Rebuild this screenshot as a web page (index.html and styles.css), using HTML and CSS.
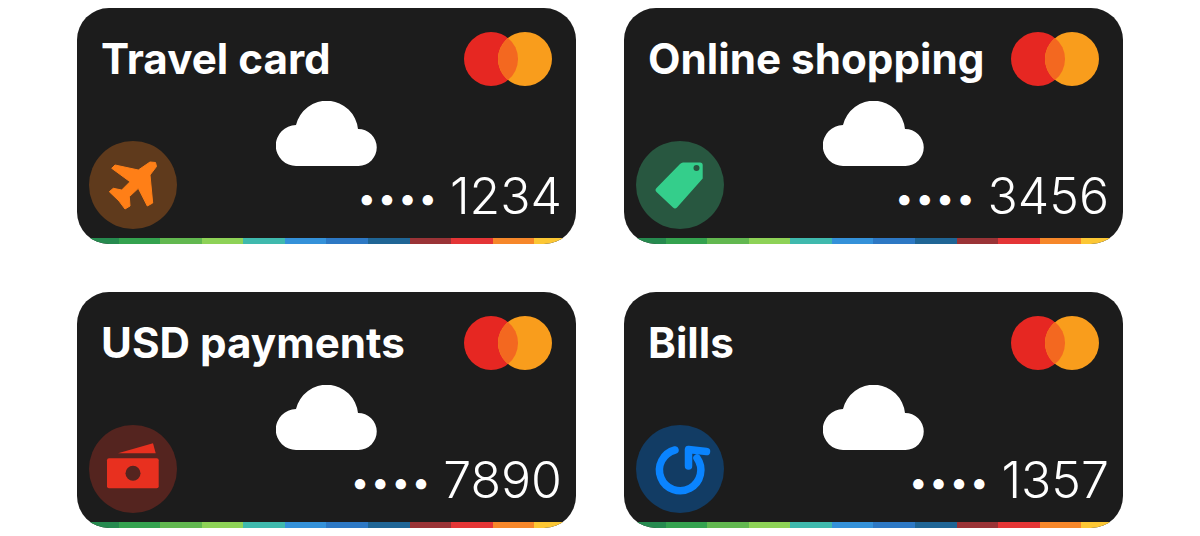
FILE: index.html
```html
<!DOCTYPE html>
<html lang="en">
<head>
    <meta charset="UTF-8">
    <meta name="viewport" content="width=device-width, initial-scale=1.0">
    <title>Cards</title>
    <link rel="stylesheet" href="styles.css">
</head>
<body>
    <svg class="defs" width="0" height="0" aria-hidden="true">
        <symbol id="mastercard" viewBox="0 0 88 54">
            <circle cx="27" cy="27" r="27" fill="#e62722"/>
            <circle cx="61" cy="27" r="27" fill="#f99d1c"/>
            <path d="M44 6A27 27 0 0 1 44 48A27 27 0 0 1 44 6Z" fill="#f36820"/>
        </symbol>
        <symbol id="cloud" viewBox="0 0 102 65">
            <path d="M20.500 65A20.500 20.500 0 0 1 20 24A31.500 31.500 0 0 1 82 28A18.500 18.500 0 0 1 82.500 65Z" fill="#fff"/>
        </symbol>
    </svg>

    <div class="cards">
        <div class="card">
            <div class="card-top">
                <h2 class="card-name">Travel card</h2>
                <svg class="mc-logo"><use href="#mastercard"/></svg>
            </div>
            <svg class="cloud"><use href="#cloud"/></svg>
            <div class="card-bottom">
                <div class="badge badge-orange">
                    <svg viewBox="0 0 88 88">
                        <polygon class="plane" points="66.500,21.500 67.500,25.500 61,34 63.700,62 58.300,65 49.300,47.300 40.300,55.700 41,65 36,68 30,60 20.300,50.700 24.300,47.300 32.700,49 41,40.700 22.700,27.300 26,24 49.300,29 61,21"/>
                    </svg>
                </div>
                <div class="card-number"><span class="dots">••••</span>1234</div>
            </div>
            <div class="stripe"><i></i><i></i><i></i><i></i><i></i><i></i><i></i><i></i><i></i><i></i><i></i><i></i></div>
        </div>

        <div class="card">
            <div class="card-top">
                <h2 class="card-name">Online shopping</h2>
                <svg class="mc-logo"><use href="#mastercard"/></svg>
            </div>
            <svg class="cloud"><use href="#cloud"/></svg>
            <div class="card-bottom">
                <div class="badge badge-green">
                    <svg viewBox="0 0 88 88">
                        <path class="tag" d="M47 21.500H64Q66.700 21.500 66.700 24V37.500L41 66.500Q39 68.500 37 66.500L20.500 51Q18.500 49 20.500 47L44 23Q45.500 21.500 47 21.500Z"/>
                        <circle class="tag-hole" cx="60.500" cy="27" r="3"/>
                    </svg>
                </div>
                <div class="card-number"><span class="dots">••••</span>3456</div>
            </div>
            <div class="stripe"><i></i><i></i><i></i><i></i><i></i><i></i><i></i><i></i><i></i><i></i><i></i><i></i></div>
        </div>

        <div class="card">
            <div class="card-top">
                <h2 class="card-name">USD payments</h2>
                <svg class="mc-logo"><use href="#mastercard"/></svg>
            </div>
            <svg class="cloud"><use href="#cloud"/></svg>
            <div class="card-bottom">
                <div class="badge badge-red">
                    <svg viewBox="0 0 88 88">
                        <polygon class="wallet" points="29,28.300 64,18.300 66.700,28.300"/>
                        <rect class="wallet" x="18" y="33.300" width="51.700" height="30" rx="2"/>
                        <circle class="wallet-hole" cx="44" cy="48.300" r="7.500"/>
                    </svg>
                </div>
                <div class="card-number"><span class="dots">••••</span>7890</div>
            </div>
            <div class="stripe"><i></i><i></i><i></i><i></i><i></i><i></i><i></i><i></i><i></i><i></i><i></i><i></i></div>
        </div>

        <div class="card">
            <div class="card-top">
                <h2 class="card-name">Bills</h2>
                <svg class="mc-logo"><use href="#mastercard"/></svg>
            </div>
            <svg class="cloud"><use href="#cloud"/></svg>
            <div class="card-bottom">
                <div class="badge badge-blue">
                    <svg viewBox="0 0 88 88">
                        <path class="repeat" d="M39 25A20.700 20.700 0 1 0 61 33"/>
                        <path class="repeat" d="M70.500 26.500L52.500 24.500V41"/>
                    </svg>
                </div>
                <div class="card-number"><span class="dots">••••</span>1357</div>
            </div>
            <div class="stripe"><i></i><i></i><i></i><i></i><i></i><i></i><i></i><i></i><i></i><i></i><i></i><i></i></div>
        </div>
    </div>
</body>
</html>
```

FILE: styles.css
```css
body {
    margin: 0;
    padding: 8px 0 0;
    background-color: #fff;
    font-family: Inter, "Liberation Sans", sans-serif;
}
.defs { position: absolute; }
.cards {
    display: grid;
    grid-template-columns: 499px 499px;
    gap: 48px;
    justify-content: center;
}
.card {
    position: relative;
    display: flex;
    flex-direction: column;
    height: 236px;
    border-radius: 32px;
    background-color: #1c1c1c;
    overflow: hidden;
}
.card-top {
    display: flex;
    justify-content: space-between;
    padding: 24px 24px 0 24px;
}
.card-name {
    margin: 0;
    font-size: 42.2px;
    font-weight: 650;
    line-height: 54px;
    color: #fff;
}
.mc-logo { width: 88px; height: 54px; }
.cloud {
    position: absolute;
    top: 93px;
    left: 199px;
    width: 102px;
    height: 65px;
}
.card-bottom {
    display: flex;
    justify-content: space-between;
    align-items: flex-end;
    margin-top: auto;
    padding: 0 14px 9px 12px;
}
.badge { width: 88px; height: 88px; border-radius: 50%; }
.badge svg { display: block; width: 88px; height: 88px; }
.badge-orange { background-color: #5f3a1c; }
.badge-green { background-color: #285740; }
.badge-red { background-color: #54241f; }
.badge-blue { background-color: #123c64; }
.plane { fill: #ff7f17; stroke: #ff7f17; stroke-width: 1; stroke-linejoin: round; }
.tag { fill: #34ce8b; }
.tag-hole { fill: #285740; }
.wallet { fill: #e8301f; }
.wallet-hole { fill: #54241f; }
.repeat { fill: none; stroke: #0a84ff; stroke-width: 7.5; stroke-linecap: round; stroke-linejoin: round; }
.card-number {
    display: flex;
    align-items: center;
    margin-bottom: 4px;
    font-size: 50px;
    font-weight: 300;
    line-height: 58px;
    color: #fff;
}
.dots {
    margin-top: 4px;
    margin-right: 11px;
    font-size: 33px;
    font-weight: 400;
    line-height: 33px;
    letter-spacing: 1.800px;
}
.stripe { display: flex; height: 6px; flex-shrink: 0; }
.stripe i { flex: 1; }
.stripe i:nth-child(1) { background-color: #268a4f; }
.stripe i:nth-child(2) { background-color: #34a24f; }
.stripe i:nth-child(3) { background-color: #62b850; }
.stripe i:nth-child(4) { background-color: #8ed257; }
.stripe i:nth-child(5) { background-color: #3fb9ad; }
.stripe i:nth-child(6) { background-color: #3491d9; }
.stripe i:nth-child(7) { background-color: #2d78c4; }
.stripe i:nth-child(8) { background-color: #1f6595; }
.stripe i:nth-child(9) { background-color: #9a3336; }
.stripe i:nth-child(10) { background-color: #e43536; }
.stripe i:nth-child(11) { background-color: #f6872a; }
.stripe i:nth-child(12) { background-color: #fcc734; }
```
